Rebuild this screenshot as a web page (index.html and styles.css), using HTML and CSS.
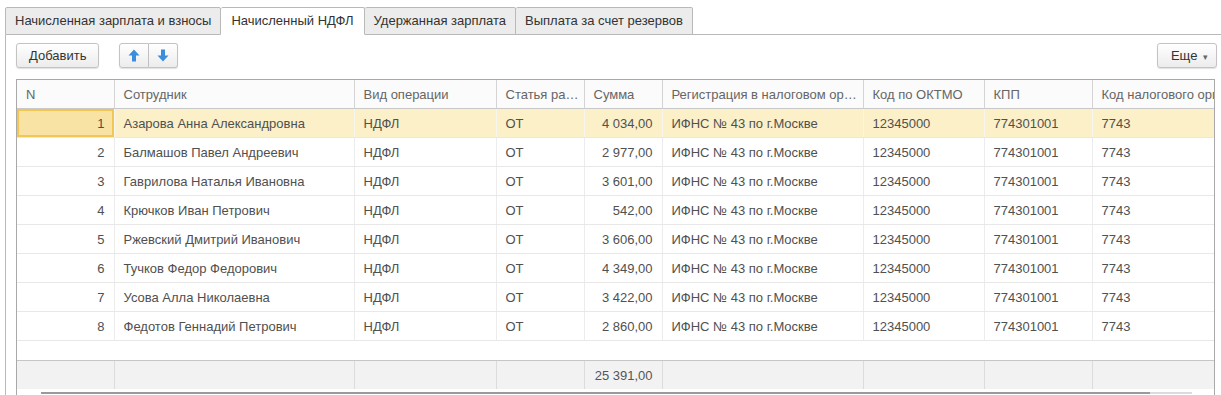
FILE: index.html
```html
<!DOCTYPE html>
<html lang="ru">
<head>
  <meta charset="UTF-8" />
  <title>Начисленный НДФЛ</title>
  <link rel="stylesheet" href="styles.css">
</head>
<body>
  <div class="tabs">
    <div class="tab">Начисленная зарплата и взносы</div>
    <div class="tab active">Начисленный НДФЛ</div>
    <div class="tab">Удержанная зарплата</div>
    <div class="tab">Выплата за счет резервов</div>
    <div class="tab-fill"></div>
  </div>

  <div class="panel">
    <div class="toolbar">
      <button class="btn">Добавить</button>
      <div class="btn-group">
        <button class="btn icon">
          <svg width="12" height="13" viewBox="0 0 12 13"><path d="M6 0.5 L11.5 6.5 L8 6.5 L8 12.5 L4 12.5 L4 6.5 L0.5 6.5 Z" fill="#3a8fdc"/></svg>
        </button>
        <button class="btn icon">
          <svg width="12" height="13" viewBox="0 0 12 13"><path d="M6 12.5 L11.5 6.5 L8 6.5 L8 0.5 L4 0.5 L4 6.5 L0.5 6.5 Z" fill="#3a8fdc"/></svg>
        </button>
      </div>
      <div class="spacer"></div>
      <button class="btn more">Еще <span class="caret">▾</span></button>
    </div>

    <div class="grid">
      <table>
        <colgroup>
          <col style="width:97px"><col style="width:240px"><col style="width:142px">
          <col style="width:88px"><col style="width:78px"><col style="width:201px">
          <col style="width:121px"><col style="width:108px"><col style="width:160px">
        </colgroup>
        <thead>
          <tr>
            <th>N</th><th>Сотрудник</th><th>Вид операции</th><th class="tight">Статья расходов</th>
            <th>Сумма</th><th class="tight">Регистрация в налоговом органе</th><th>Код по ОКТМО</th>
            <th>КПП</th><th class="clip">Код налогового органа</th>
          </tr>
        </thead>
        <tbody id="rows"></tbody>
        <tfoot>
          <tr class="filler"><td colspan="9"></td></tr>
          <tr class="total">
            <td></td><td></td><td></td><td></td><td class="num">25 391,00</td>
            <td></td><td></td><td></td><td></td>
          </tr>
        </tfoot>
      </table>
      <div class="hscroll"><div class="track"></div><div class="thumb"></div></div>
    </div>
  </div>

  <script>
    var data = [
      ['Азарова Анна Александровна', '4 034,00'],
      ['Балмашов Павел Андреевич', '2 977,00'],
      ['Гаврилова Наталья Ивановна', '3 601,00'],
      ['Крючков Иван Петрович', '542,00'],
      ['Ржевский Дмитрий Иванович', '3 606,00'],
      ['Тучков Федор Федорович', '4 349,00'],
      ['Усова Алла Николаевна', '3 422,00'],
      ['Федотов Геннадий Петрович', '2 860,00']
    ];
    var tbody = document.getElementById('rows');
    data.forEach(function (d, i) {
      var tr = document.createElement('tr');
      if (i === 0) tr.className = 'current';
      tr.innerHTML = '<td class="num n">' + (i + 1) + '</td><td>' + d[0] + '</td><td>НДФЛ</td><td>ОТ</td>' +
        '<td class="num">' + d[1] + '</td><td>ИФНС № 43 по г.Москве</td><td>12345000</td><td>774301001</td><td>7743</td>';
      tbody.appendChild(tr);
    });
  </script>
</body>
</html>
```

FILE: styles.css
```css
body {
  margin: 0;
  font-family: "Liberation Sans", Arial, sans-serif;
  font-size: 13px;
  color: #505050;
  background: #fff;
  overflow: hidden;
}
.tabs {
  display: flex;
  padding: 7px 0 0 5px;
  box-sizing: border-box;
  height: 35px;
}
.tab {
  box-sizing: border-box;
  height: 28px;
  line-height: 26px;
  padding: 0 9px;
  background: #ececec;
  color: #333;
  border: 1px solid #b9b9b9;
  border-left: none;
  border-radius: 2px 2px 0 0;
  white-space: nowrap;
}
.tab:first-child {
  border-left: 1px solid #b9b9b9;
}
.tab.active {
  background: #fff;
  border-bottom-color: #fff;
  padding: 0 10px;
}
.tab-fill {
  flex: 1;
  border-bottom: 1px solid #b9b9b9;
}
.panel {
  margin-left: 5px;
  border-left: 1px solid #b9b9b9;
  padding: 8px 0 0 10px;
  height: 400px;
}
.toolbar {
  display: flex;
  align-items: center;
  height: 25px;
  padding-right: 4px;
}
.spacer {
  flex: 1;
}
.btn {
  height: 25px;
  padding: 0 12px;
  font-family: inherit;
  font-size: 13px;
  color: #333;
  background: linear-gradient(#ffffff, #ececec);
  border: 1px solid #c3c3c3;
  border-radius: 3px;
  box-shadow: 0 1px 1px rgba(0,0,0,0.12);
}
.btn-group {
  display: flex;
  margin-left: 20px;
}
.btn.icon {
  width: 30px;
  padding: 0;
  display: flex;
  align-items: center;
  justify-content: center;
}
.btn-group .btn:first-child {
  border-radius: 3px 0 0 3px;
}
.btn-group .btn:last-child {
  border-left: none;
  border-radius: 0 3px 3px 0;
  width: 29px;
}
.btn.more {
  padding: 0 8px 0 13px;
}
.caret {
  font-size: 9px;
  color: #666;
  margin-left: 2px;
}
.grid {
  margin-top: 11px;
  width: 1197px;
  border: 1px solid #a9a9a9;
  overflow: hidden;
  height: 330px;
}
table {
  border-collapse: collapse;
  table-layout: fixed;
  width: 1235px;
}
th, td {
  height: 28px;
  padding: 0 9px;
  text-align: left;
  white-space: nowrap;
  overflow: hidden;
  text-overflow: ellipsis;
}
th {
  font-weight: normal;
  color: #666;
  background: #fbfbfb;
  border-left: 1px solid #d4d4d4;
  border-bottom: 1px solid #c8c8c8;
}
th.tight {
  padding-right: 4px;
}
th:first-child, td:first-child {
  border-left: none;
}
th.clip {
  text-overflow: clip;
}
tbody td {
  border-left: 1px solid #ececec;
  border-bottom: 1px solid #e8e8e8;
}
td.num {
  text-align: right;
}
tr.current td {
  background: #fbf0c8;
  border-left-color: #f6f6ee;
}
tr.current td.n {
  background: #f8e3a4;
  box-shadow: inset 0 0 0 2px #f1c652;
}
tr.filler td {
  height: 19px;
  padding: 0;
}
tr.total td {
  background: #f2f2f2;
  border-top: 1px solid #c6c6c6;
  border-left: 1px solid #dcdcdc;
  height: 28px;
  color: #555;
}
tr.total td:first-child {
  border-left: none;
}
.hscroll {
  display: flex;
  margin: 3px 0 0 24px;
}
.track {
  width: 1109px;
  height: 2px;
  background: #9a9a9a;
}
.thumb {
  width: 42px;
  height: 2px;
  background: #dcdcdc;
}
```
